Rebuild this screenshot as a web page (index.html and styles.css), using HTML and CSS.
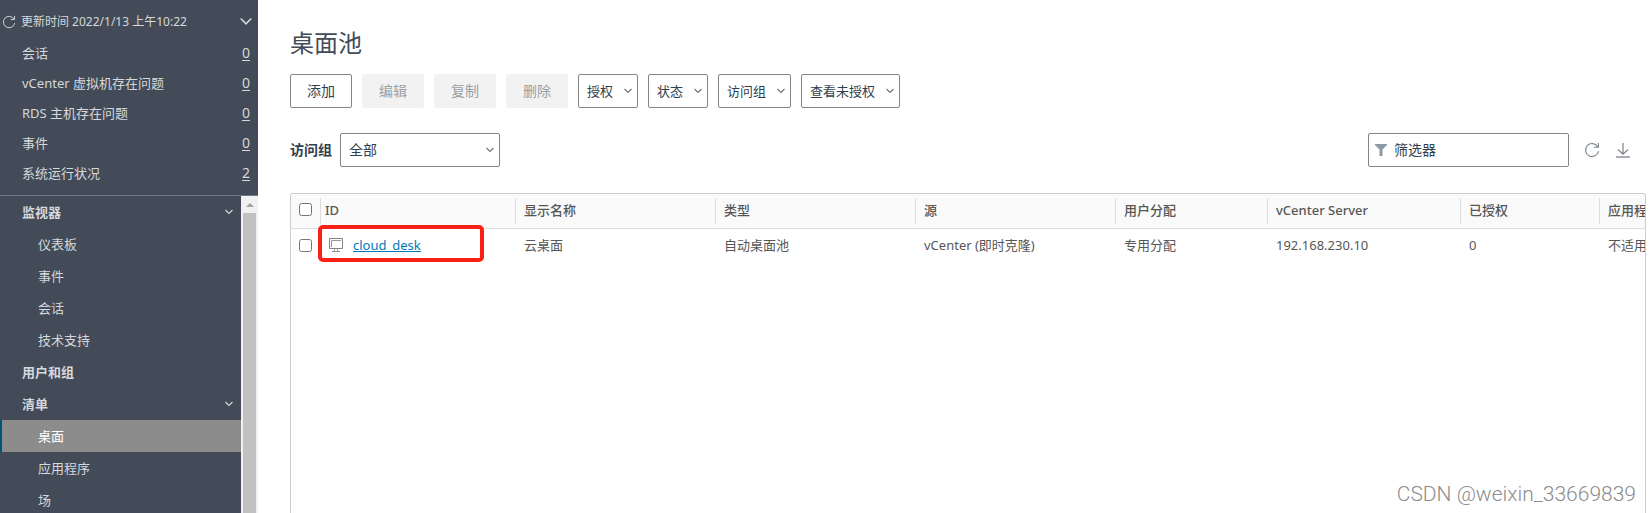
FILE: index.html
```html
<!DOCTYPE html>
<html lang="zh-CN">
<head>
    <meta charset="UTF-8">
    <meta name="viewport" content="width=device-width, initial-scale=1.0">
    <title>桌面池</title>
    <link rel="stylesheet" href="styles.css">
</head>
<body>

    <!-- Shared icons -->
    <svg class="sprite" width="0" height="0" aria-hidden="true">
        <symbol id="chevron" viewBox="0 0 8 6">
            <path d="M0.5 1 L4 4.5 L7.5 1" fill="none" stroke="currentColor" stroke-width="1.1"/>
        </symbol>
        <symbol id="refresh" viewBox="0 0 16 16">
            <path d="M13.6 4.6 A6.5 6.5 0 1 0 14.5 9.2 M14.4 1 V5.2 H10" fill="none" stroke="currentColor" stroke-width="1.1"/>
        </symbol>
    </svg>

    <aside class="sidebar">
        <section class="summary">
            <div class="summary-head">
                <button class="icon-btn" aria-label="刷新"><svg class="icon-refresh"><use href="#refresh"/></svg></button>
                <span class="updated">更新时间 2022/1/13 上午10:22</span>
                <button class="icon-btn" aria-label="折叠"><svg class="icon-collapse"><use href="#chevron"/></svg></button>
            </div>
            <ul class="summary-list">
                <li><span>会话</span><a href="#">0</a></li>
                <li><span>vCenter 虚拟机存在问题</span><a href="#">0</a></li>
                <li><span>RDS 主机存在问题</span><a href="#">0</a></li>
                <li><span>事件</span><a href="#">0</a></li>
                <li><span>系统运行状况</span><a href="#">2</a></li>
            </ul>
        </section>

        <div class="menu-wrap">
            <nav class="menu">
                <a class="group" href="#">监视器<svg class="chevron"><use href="#chevron"/></svg></a>
                <a href="#">仪表板</a>
                <a href="#">事件</a>
                <a href="#">会话</a>
                <a href="#">技术支持</a>
                <a class="group" href="#">用户和组</a>
                <a class="group" href="#">清单<svg class="chevron"><use href="#chevron"/></svg></a>
                <a class="active" href="#">桌面</a>
                <a href="#">应用程序</a>
                <a href="#">场</a>
            </nav>
            <div class="scrollbar">
                <svg class="scroll-up" viewBox="0 0 8 4"><path d="M4 0 L8 4 H0 Z" fill="#a3a3a3"/></svg>
                <div class="scroll-thumb"></div>
            </div>
        </div>
    </aside>

    <main class="content">
        <h1>桌面池</h1>

        <div class="toolbar">
            <button class="btn">添加</button>
            <button class="btn" disabled>编辑</button>
            <button class="btn" disabled>复制</button>
            <button class="btn" disabled>删除</button>
            <button class="btn btn-menu" aria-haspopup="true">授权<svg class="chevron"><use href="#chevron"/></svg></button>
            <button class="btn btn-menu" aria-haspopup="true">状态<svg class="chevron"><use href="#chevron"/></svg></button>
            <button class="btn btn-menu" aria-haspopup="true">访问组<svg class="chevron"><use href="#chevron"/></svg></button>
            <button class="btn btn-menu" aria-haspopup="true">查看未授权<svg class="chevron"><use href="#chevron"/></svg></button>
        </div>

        <div class="filters">
            <label for="accessGroup">访问组</label>
            <div class="select">
                <select id="accessGroup">
                    <option>全部</option>
                </select>
                <svg class="chevron"><use href="#chevron"/></svg>
            </div>
            <div class="search">
                <svg class="icon-filter" viewBox="0 0 12 12"><path d="M0 0 H12 V1 L7.5 5.5 V12 H4.5 V5.5 L0 1 Z" fill="#8d9aa6"/></svg>
                <input type="text" placeholder="筛选器" aria-label="筛选器">
            </div>
            <button class="icon-btn" aria-label="刷新"><svg class="icon-action"><use href="#refresh"/></svg></button>
            <button class="icon-btn" aria-label="导出">
                <svg class="icon-action" viewBox="0 0 16 16">
                    <path d="M8 1 V12 M3 7.5 L8 12.2 L13 7.5" fill="none" stroke="currentColor" stroke-width="1.2"/>
                    <path d="M1 15 H15" stroke="#a9adb2" stroke-width="2"/>
                </svg>
            </button>
        </div>

        <div class="grid">
            <table>
                <colgroup>
                    <col class="col-check">
                    <col class="col-id">
                    <col class="col-wide">
                    <col class="col-wide">
                    <col class="col-wide">
                    <col class="col-assign">
                    <col class="col-server">
                    <col class="col-entitled">
                    <col class="col-apps">
                </colgroup>
                <thead>
                    <tr>
                        <th class="check"><input type="checkbox" aria-label="全选"></th>
                        <th class="id">ID</th>
                        <th>显示名称</th>
                        <th>类型</th>
                        <th>源</th>
                        <th>用户分配</th>
                        <th>vCenter Server</th>
                        <th>已授权</th>
                        <th>应用程序</th>
                    </tr>
                </thead>
                <tbody>
                    <tr>
                        <td class="check"><input type="checkbox" aria-label="选择 cloud_desk"></td>
                        <td class="id">
                            <div class="pool">
                                <svg class="icon-desktop" viewBox="0 0 14 14">
                                    <path d="M0.5 0.5 H13.5 V10.5 H0.5 Z" fill="none" stroke="#858585"/>
                                    <path d="M2.5 9 V2.5 H12" fill="none" stroke="#9a9a9a"/>
                                    <path d="M5.5 11 V13 M8.5 11 V13" fill="none" stroke="#aaa"/>
                                    <path d="M3 13.5 H11" stroke="#8a8a8a"/>
                                </svg>
                                <a href="#">cloud_desk</a>
                            </div>
                            <span class="highlight"></span>
                        </td>
                        <td>云桌面</td>
                        <td>自动桌面池</td>
                        <td>vCenter (即时克隆)</td>
                        <td>专用分配</td>
                        <td>192.168.230.10</td>
                        <td>0</td>
                        <td>不适用</td>
                    </tr>
                </tbody>
            </table>
        </div>
    </main>

    <div class="watermark">CSDN @weixin_33669839</div>

</body>
</html>
```

FILE: styles.css
```css
:root {
    --side: #424b57;
    --side-text: #d5d8dc;
    --border: #858585;
    --text: #565656;
    --line: #ccc;
}

* {
    box-sizing: border-box;
}

body {
    font-family: 'Noto Sans', 'Noto Sans CJK SC', sans-serif;
    font-size: 13px;
    line-height: 20px;
    color: var(--text);
    background: #fff;
    margin: 0;
    height: 100vh;
    display: flex;
    overflow: hidden;
}

button,
input,
select {
    font: inherit;
    color: inherit;
}

.sprite {
    position: absolute;
}

.chevron {
    width: 8px;
    height: 6px;
    flex: none;
}

.content .chevron {
    color: #6b7279;
}

.icon-btn {
    display: flex;
    padding: 0;
    border: none;
    background: none;
    cursor: pointer;
}

/* Sidebar */
.sidebar {
    width: 258px;
    flex: none;
    display: flex;
    flex-direction: column;
    background: var(--side);
    color: var(--side-text);
}

.summary {
    padding-bottom: 7px;
    border-bottom: 1px solid #6f7883;
}

.summary-head {
    display: flex;
    align-items: center;
    gap: 5px;
    height: 38px;
    padding: 5px 6px 0 2px;
}

.updated {
    flex: 1;
    font-size: 12px;
}

.icon-refresh {
    width: 14px;
    height: 14px;
}

.icon-collapse {
    width: 12px;
    height: 9px;
}

.summary-list {
    list-style: none;
    margin: 0;
    padding: 0 8px 0 22px;
}

.summary-list li {
    display: flex;
    justify-content: space-between;
    align-items: center;
    height: 30px;
}

.summary-list a {
    color: inherit;
    font-size: 14px;
    text-underline-offset: 2px;
}

.menu-wrap {
    flex: 1;
    min-height: 0;
    display: flex;
    overflow: hidden;
}

.menu {
    flex: 1;
}

.menu a {
    display: flex;
    justify-content: space-between;
    align-items: center;
    height: 32px;
    padding: 0 8px 1px 36px;
    border-left: 2px solid transparent;
    color: inherit;
    text-decoration: none;
}

.menu .group {
    padding-left: 20px;
    font-weight: 600;
}

.menu .active {
    background: #8c8c8c;
    background-clip: padding-box;
    border-left-color: #00567a;
    color: #fff;
}

.scrollbar {
    width: 17px;
    display: flex;
    flex-direction: column;
    background: #f1f1f1;
    padding: 0 2px;
}

.scroll-up {
    width: 8px;
    height: 4px;
    margin: 7px auto 6px;
    flex: none;
}

.scroll-thumb {
    flex: 1;
    background: #c1c1c1;
}

/* Content */
.content {
    flex: 1;
    min-width: 0;
    display: flex;
    flex-direction: column;
    padding: 26px 5px 0 32px;
}

h1 {
    font-size: 24px;
    line-height: 34px;
    font-weight: 400;
    color: #414c58;
    margin: 0 0 14px;
}

.toolbar {
    display: flex;
    gap: 10px;
    margin-bottom: 25px;
}

.btn {
    height: 34px;
    min-width: 62px;
    padding: 0 8px;
    font-size: 14px;
    color: #313f4e;
    background: #fff;
    border: 1px solid var(--border);
    border-radius: 2px;
    cursor: pointer;
}

.btn:disabled {
    background: #f2f2f2;
    border-color: #f2f2f2;
    color: #9a9fa5;
    cursor: default;
}

.btn-menu {
    display: flex;
    align-items: center;
    gap: 11px;
    min-width: 0;
    padding: 0 5px 0 8px;
    font-size: 13px;
}

.filters {
    display: flex;
    align-items: center;
    gap: 8px;
    margin-bottom: 26px;
    color: #313f4e;
}

.filters label {
    font-size: 14px;
    font-weight: 600;
}

.filters .icon-btn {
    color: #7d858d;
    margin-left: 7px;
}

.icon-action {
    width: 16px;
    height: 16px;
}

.select {
    display: grid;
    align-items: center;
    width: 160px;
}

.select select,
.select .chevron {
    grid-area: 1 / 1;
}

.select select {
    height: 34px;
    padding: 0 8px;
    font-size: 14px;
    appearance: none;
    background: #fff;
    border: 1px solid var(--border);
    border-radius: 2px;
}

.select .chevron {
    justify-self: end;
    margin-right: 6px;
    pointer-events: none;
}

.search {
    display: flex;
    align-items: center;
    gap: 7px;
    width: 201px;
    height: 34px;
    margin-left: auto;
    padding: 0 6px;
    border: 1px solid var(--border);
    border-radius: 2px;
}

.search input {
    flex: 1;
    min-width: 0;
    padding: 0;
    font-size: 14px;
    border: none;
    outline: none;
    background: none;
}

.search input::placeholder {
    color: #313f4e;
}

.icon-filter {
    width: 12px;
    height: 12px;
    flex: none;
}

.filters .icon-btn:last-child {
    margin-right: 15px;
}

/* Table */
.grid {
    flex: 1;
    min-height: 0;
    overflow: hidden;
    border: 1px solid var(--line);
    border-bottom: none;
    border-radius: 3px 3px 0 0;
}

table {
    table-layout: fixed;
    width: 1459px;
    border-collapse: separate;
    border-spacing: 0;
}

.col-check { width: 29px; }
.col-id { width: 195px; }
.col-wide { width: 200px; }
.col-assign { width: 152px; }
.col-server { width: 193px; }
.col-entitled { width: 139px; }
.col-apps { width: 151px; }

th,
td {
    height: 35px;
    padding: 0 9px 3px;
    text-align: left;
    white-space: nowrap;
}

th {
    font-weight: 500;
    border-bottom: 1px solid #ddd;
    background: linear-gradient(#ddd, #ddd) left center / 1px 26px no-repeat #fafafa;
}

.check {
    padding: 0 0 3px 8px;
    background-size: 0 0;
}

.check input {
    display: block;
    width: 13px;
    height: 13px;
    margin: 0;
}

.id {
    position: relative;
    padding-left: 5px;
}

.pool {
    display: flex;
    align-items: center;
    gap: 10px;
    padding-left: 4px;
}

.pool a {
    color: #0079b8;
}

.icon-desktop {
    width: 14px;
    height: 14px;
}

.highlight {
    position: absolute;
    left: -2px;
    top: -4px;
    width: 166px;
    height: 37px;
    border: 4px solid #fb2015;
    border-radius: 5px;
    pointer-events: none;
}

.watermark {
    position: absolute;
    right: 15px;
    bottom: 7px;
    font-family: Roboto, sans-serif;
    font-weight: 300;
    font-size: 21px;
    line-height: 24px;
    color: #8c8c8c;
    text-shadow: 1px 1px 0 #fff;
}
```
